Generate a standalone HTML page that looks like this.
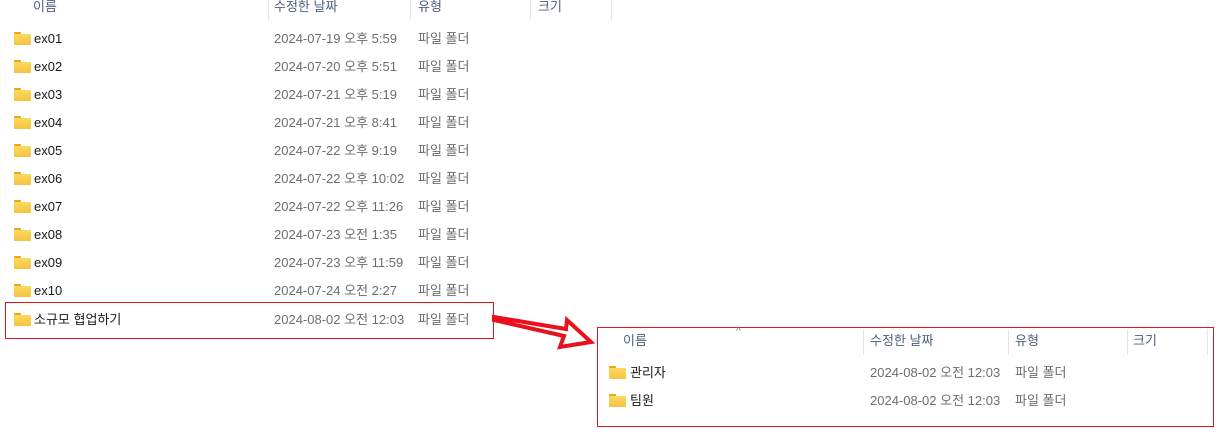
<!DOCTYPE html>
<html><head><meta charset="utf-8"><style>
body{margin:0;width:1227px;height:447px;background:#fff;position:relative;overflow:hidden;font-family:"Liberation Sans","Noto Sans CJK KR",sans-serif;font-size:13px}
.t{position:absolute;white-space:nowrap;line-height:14px}
.h{color:#4c607a}
.n{color:#1a1a1a}
.g{color:#6d6d6d}
.d{position:absolute;width:1px;background:#e5e5e5}
.f{position:absolute;width:17px;height:13px}
.f:before{content:"";position:absolute;left:0;top:0;width:7px;height:4px;background:#e8a90c;border-radius:1px 1px 0 0}
.f:after{content:"";position:absolute;left:0;top:2px;width:17px;height:11px;background:linear-gradient(#ffd860,#f4c340);border-radius:1px}
.box{position:absolute;border:1px solid #e8111d}
</style></head><body>
<div class="t h" style="left:33px;top:0">이름</div>
<div class="t h" style="left:274px;top:0">수정한 날짜</div>
<div class="t h" style="left:418px;top:0">유형</div>
<div class="t h" style="left:538px;top:0">크기</div>
<div class="d" style="left:268px;top:0;height:20px"></div>
<div class="d" style="left:410px;top:0;height:20px"></div>
<div class="d" style="left:530px;top:0;height:20px"></div>
<div class="d" style="left:611px;top:0;height:20px"></div>

<div class="f" style="left:14px;top:32px"></div><div class="t n" style="left:34px;top:32px">ex01</div><div class="t g" style="left:274px;top:32px">2024-07-19 오후 5:59</div><div class="t g" style="left:418px;top:32px">파일 폴더</div>
<div class="f" style="left:14px;top:60px"></div><div class="t n" style="left:34px;top:60px">ex02</div><div class="t g" style="left:274px;top:60px">2024-07-20 오후 5:51</div><div class="t g" style="left:418px;top:60px">파일 폴더</div>
<div class="f" style="left:14px;top:88px"></div><div class="t n" style="left:34px;top:88px">ex03</div><div class="t g" style="left:274px;top:88px">2024-07-21 오후 5:19</div><div class="t g" style="left:418px;top:88px">파일 폴더</div>
<div class="f" style="left:14px;top:116px"></div><div class="t n" style="left:34px;top:116px">ex04</div><div class="t g" style="left:274px;top:116px">2024-07-21 오후 8:41</div><div class="t g" style="left:418px;top:116px">파일 폴더</div>
<div class="f" style="left:14px;top:144px"></div><div class="t n" style="left:34px;top:144px">ex05</div><div class="t g" style="left:274px;top:144px">2024-07-22 오후 9:19</div><div class="t g" style="left:418px;top:144px">파일 폴더</div>
<div class="f" style="left:14px;top:172px"></div><div class="t n" style="left:34px;top:172px">ex06</div><div class="t g" style="left:274px;top:172px">2024-07-22 오후 10:02</div><div class="t g" style="left:418px;top:172px">파일 폴더</div>
<div class="f" style="left:14px;top:200px"></div><div class="t n" style="left:34px;top:200px">ex07</div><div class="t g" style="left:274px;top:200px">2024-07-22 오후 11:26</div><div class="t g" style="left:418px;top:200px">파일 폴더</div>
<div class="f" style="left:14px;top:228px"></div><div class="t n" style="left:34px;top:228px">ex08</div><div class="t g" style="left:274px;top:228px">2024-07-23 오전 1:35</div><div class="t g" style="left:418px;top:228px">파일 폴더</div>
<div class="f" style="left:14px;top:256px"></div><div class="t n" style="left:34px;top:256px">ex09</div><div class="t g" style="left:274px;top:256px">2024-07-23 오후 11:59</div><div class="t g" style="left:418px;top:256px">파일 폴더</div>
<div class="f" style="left:14px;top:284px"></div><div class="t n" style="left:34px;top:284px">ex10</div><div class="t g" style="left:274px;top:284px">2024-07-24 오전 2:27</div><div class="t g" style="left:418px;top:284px">파일 폴더</div>
<div class="f" style="left:14px;top:313px"></div><div class="t n" style="left:34px;top:313px">소규모 협업하기</div><div class="t g" style="left:274px;top:313px">2024-08-02 오전 12:03</div><div class="t g" style="left:418px;top:313px">파일 폴더</div>
<div class="box" style="left:5px;top:302px;width:487px;height:35px"></div>

<svg style="position:absolute;left:0;top:0" width="1227" height="447"><polygon points="494,317 566,329 567,320 591,342 560,347 564,336 494,320" fill="#fff" stroke="#e8111d" stroke-width="4" stroke-linejoin="miter"/></svg>

<div class="box" style="left:597px;top:327px;width:615px;height:98px"></div>
<div class="t" style="left:736px;top:325px;color:#777;font-size:10px">^</div>
<div class="t h" style="left:623px;top:334px">이름</div>
<div class="t h" style="left:870px;top:334px">수정한 날짜</div>
<div class="t h" style="left:1015px;top:334px">유형</div>
<div class="t h" style="left:1133px;top:334px">크기</div>
<div class="d" style="left:863px;top:330px;height:25px"></div>
<div class="d" style="left:1008px;top:330px;height:25px"></div>
<div class="d" style="left:1127px;top:330px;height:25px"></div>
<div class="d" style="left:1207px;top:330px;height:25px"></div>
<div class="f" style="left:609px;top:366px"></div><div class="t n" style="left:630px;top:366px">관리자</div><div class="t g" style="left:870px;top:366px">2024-08-02 오전 12:03</div><div class="t g" style="left:1015px;top:366px">파일 폴더</div>
<div class="f" style="left:609px;top:394px"></div><div class="t n" style="left:630px;top:394px">팀원</div><div class="t g" style="left:870px;top:394px">2024-08-02 오전 12:03</div><div class="t g" style="left:1015px;top:394px">파일 폴더</div>
</body></html>
